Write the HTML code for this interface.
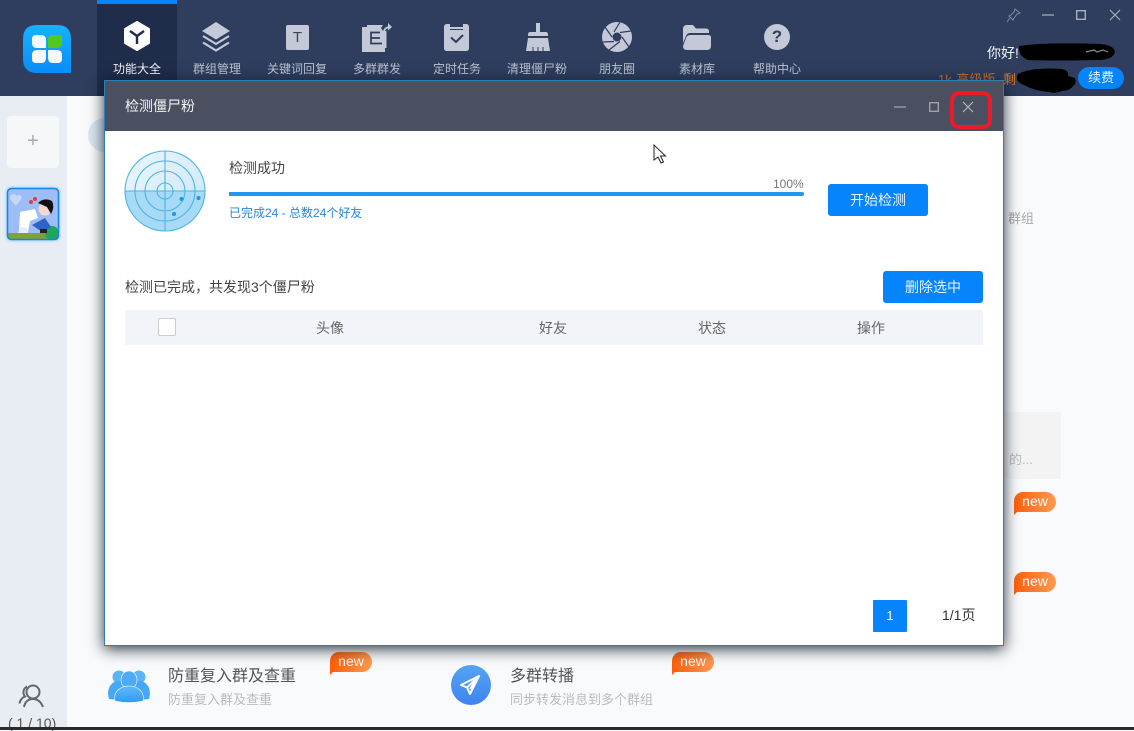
<!DOCTYPE html>
<html lang="zh"><head><meta charset="utf-8"><title>检测僵尸粉</title>
<style>
html,body{margin:0;padding:0}
body{width:1134px;height:730px;position:relative;overflow:hidden;background:#f8fafc;font-family:"Liberation Sans","Noto Sans CJK SC",sans-serif;color:#333}
.a{position:absolute;white-space:nowrap}
.nav{position:absolute;top:62px;width:80px;text-align:center;font-size:12px;line-height:14px;color:#bcc3d0}
.ic{position:absolute;overflow:visible}
.new{position:absolute;width:42px;height:20px;background:linear-gradient(90deg,#ff5f0c,#ff9a4e);border-radius:9px 10px 10px 0;color:#fff;font-size:14px;line-height:19px;text-align:center}
.new:after{content:"";position:absolute;left:0;top:18px;border-left:5px solid #ff5f0c;border-bottom:5px solid transparent}
.btn{position:absolute;width:100px;height:32px;background:#0684fb;border-radius:3px;color:#e8f4ff;font-size:14px;line-height:32px;text-align:center}
.th{position:absolute;top:320px;font-size:14px;line-height:16px;color:#666}
</style></head><body>

<!-- sidebar -->
<div class="a" style="left:0;top:96px;width:67px;height:631px;background:#e8edf3"></div>
<div class="a" style="left:7px;top:116px;width:52px;height:52px;background:#f6f7f8;border-radius:4px;text-align:center;font-size:20px;line-height:50px;color:#aaa">+</div>
<svg class="ic" style="left:7px;top:188px" width="52" height="52" viewBox="0 0 52 52">
<defs><clipPath id="av"><rect width="52" height="52" rx="4"/></clipPath></defs>
<g clip-path="url(#av)"><rect width="52" height="52" fill="#9cbdf6"/>
<path d="M3 8q4-4 7 0 3-3 5 2l-6 8-6-7z" fill="#c5d8fa"/>
<rect y="45" width="52" height="7" fill="#7da23c"/><circle cx="45" cy="45" r="7" fill="#1fa65a"/>
<path d="M13 24l15-3 3 9-8 3-2 11H12z" fill="#fff"/><path d="M14 39l6 1 1 5H11z" fill="#e8eef5"/>
<circle cx="38" cy="21" r="6.500" fill="#f6d9c8"/><path d="M31 15q6-6 14-2 3 6-1 13l-4-7z" fill="#111"/>
<path d="M25 37l13-7 6 9-9 5z" fill="#2c63c5"/><rect x="33" y="41" width="7" height="4" fill="#222"/>
<circle cx="24" cy="14" r="2" fill="#d8404a"/><circle cx="28" cy="11" r="2" fill="#d8404a"/></g>
<rect x=".5" y=".5" width="51" height="51" rx="4" fill="none" stroke="#1784e6" stroke-width="1.500"/></svg>
<div class="a" style="left:7px;top:188px;width:52px;height:52px;border-radius:4px;box-shadow:0 0 3px #45b4ff"></div>
<svg class="ic" style="left:18px;top:683px" width="28" height="26" viewBox="0 0 28 26" fill="none" stroke="#5f6670" stroke-width="2">
<circle cx="15" cy="9" r="6.500"/><path d="M6 24c1-5 4-8 9-8s8 3 10 8"/><path d="M9 3.500a6.500 6.500 0 0 0-2 10c-3 1-5 4-5.500 7"/></svg>
<div class="a" style="left:8px;top:715px;font-size:14px;line-height:16px;color:#555">( 1 / 10)</div>

<!-- background content -->
<div class="a" style="left:88px;top:118px;width:34px;height:34px;border-radius:50%;background:#d9e6f3"></div>
<div class="a" style="left:1008px;top:211px;font-size:13px;line-height:16px;color:#aaa">群组</div>
<div class="a" style="left:1003px;top:412px;width:58px;height:67px;background:#f3f3f4"></div>
<div class="a" style="left:1009px;top:452px;font-size:13px;line-height:16px;color:#bbb">的...</div>
<div class="new" style="left:1014px;top:492px">new</div>
<div class="new" style="left:1014px;top:572px">new</div>
<div class="new" style="left:330px;top:652px">new</div>
<div class="new" style="left:672px;top:652px">new</div>

<svg class="ic" style="left:108px;top:670px" width="42" height="33" viewBox="0 0 42 33">
<defs><linearGradient id="g1" x1="0" y1="0" x2="0" y2="1"><stop offset="0" stop-color="#62b8f8"/><stop offset="1" stop-color="#2f9bf5"/></linearGradient></defs>
<circle cx="11" cy="7" r="6.500" fill="#5ab5f8"/><circle cx="31" cy="7" r="6.500" fill="#5ab5f8"/>
<path d="M1 29c-3-10 2-18 10-18h20c8 0 13 8 10 18q-20 3-40 0z" fill="#45a8f6"/>
<ellipse cx="21" cy="10" rx="8" ry="9" fill="#4fabf7" stroke="#f8fafc" stroke-width=".6"/>
<path d="M7 31c-2-9 5-15 14-15s16 6 14 15q-14 3-28 0z" fill="url(#g1)" stroke="#f8fafc" stroke-width=".6"/></svg>
<div class="a" style="left:168px;top:667px;font-size:16px;line-height:20px;color:#555">防重复入群及查重</div>
<div class="a" style="left:168px;top:691px;font-size:13px;line-height:17px;color:#bbb">防重复入群及查重</div>

<svg class="ic" style="left:451px;top:665px" width="40" height="40" viewBox="0 0 40 40">
<defs><linearGradient id="g2" x1="0" y1="0" x2="0" y2="1"><stop offset="0" stop-color="#56a4f3"/><stop offset="1" stop-color="#3d84f0"/></linearGradient></defs>
<circle cx="20" cy="20" r="20" fill="url(#g2)"/>
<path d="M28 11L10 20l6 2.500L19 29zM16 22.500L28 11 19 24" fill="none" stroke="#fff" stroke-width="2" stroke-linejoin="round"/></svg>
<div class="a" style="left:510px;top:667px;font-size:16px;line-height:20px;color:#555">多群转播</div>
<div class="a" style="left:510px;top:691px;font-size:13px;line-height:17px;color:#bbb">同步转发消息到多个群组</div>

<div class="a" style="left:0;top:727px;width:1134px;height:3px;background:#2b2b2b"></div>

<!-- header -->
<div class="a" style="left:0;top:0;width:1134px;height:96px;background:#2f3d5e"></div>
<div class="a" style="left:97px;top:0;width:80px;height:96px;background:#1f2c4a"></div>
<div class="a" style="left:97px;top:0;width:80px;height:4px;background:#0684fb"></div>

<svg class="ic" style="left:23px;top:25px" width="48" height="48" viewBox="0 0 48 48">
<defs><linearGradient id="lg" x1="0" y1="0" x2="0" y2="1"><stop offset="0" stop-color="#18b2fb"/><stop offset="1" stop-color="#0a8cfb"/></linearGradient></defs>
<path d="M14 0h20q14 0 14 14v34H14Q0 48 0 34V14Q0 0 14 0z" fill="url(#lg)"/>
<path d="M9 14q0-4 4-4h5q5 0 5 5v8H14q-5 0-5-5z" fill="#f2f8fd"/>
<path d="M9 30q0-5 5-5h9v8q0 5-5 5h-5q-4 0-4-4z" fill="#f2f8fd"/>
<path d="M25 25h9q5 0 5 5v4q0 4-4 4h-5q-5 0-5-5z" fill="#f2f8fd"/>
<path d="M25 23v-8q0-5 5-5h9v8q0 5-5 5z" fill="#52c91e"/></svg>

<svg class="ic" style="left:123px;top:21px" width="28" height="30" viewBox="0 0 28 30">
<path d="M14 1l12 7v14l-12 7-12-7V8z" fill="#fff" stroke="#fff" stroke-width="2" stroke-linejoin="round"/>
<path d="M7 10l7 5 7-5M14 15v8" fill="none" stroke="#1f2c4a" stroke-width="2.400"/></svg>
<div class="nav" style="left:97px;color:#f2f4f8">功能大全</div>

<svg class="ic" style="left:201px;top:21px" width="30" height="31" viewBox="0 0 30 31">
<path d="M15 1l14 9-14 8.500L1 10z" fill="#c3c9d6"/>
<path d="M2 15l13 8 13-8M2 21.500l13 8 13-8" fill="none" stroke="#c3c9d6" stroke-width="2.200"/></svg>
<div class="nav" style="left:177px">群组管理</div>

<div class="a" style="left:286px;top:25px;width:23px;height:25px;background:#c3c9d6;border-radius:2px;color:#3a4665;font-size:15px;line-height:25px;text-align:center">T</div>
<div class="nav" style="left:257px">关键词回复</div>

<svg class="ic" style="left:362px;top:23px" width="31" height="30" viewBox="0 0 31 30">
<path d="M0 4h5v20h18v5H0z" fill="#c3c9d6"/>
<path d="M5 2h16l-2 3 2 3h3.500v17H5z" fill="#c3c9d6"/>
<path d="M18 9.500H9v11h11M9 15h9" stroke="#2f3d5e" stroke-width="1.700" fill="none"/>
<path d="M22 9q0-4 5-5" stroke="#c3c9d6" stroke-width="1.800" fill="none"/><path d="M26 0l4 4-4 3.500z" fill="#c3c9d6"/></svg>
<div class="nav" style="left:337px">多群群发</div>

<svg class="ic" style="left:444px;top:24px" width="25" height="27" viewBox="0 0 25 27">
<path d="M3 0h3v3h13V0h3q3 0 3 3v21q0 3-3 3H3q-3 0-3-3V3q0-3 3-3z" fill="#c3c9d6"/>
<path d="M6 5.500h13" stroke="#2f3d5e" stroke-width="1"/>
<path d="M7 13.500l5 4.500 7-7" fill="none" stroke="#2f3d5e" stroke-width="2"/></svg>
<div class="nav" style="left:417px">定时任务</div>

<svg class="ic" style="left:525px;top:22px" width="26" height="30" viewBox="0 0 26 30">
<path d="M11 1h4v9h6q2 0 2 3v1H3v-1q0-3 2-3h6z" fill="#c3c9d6"/>
<path d="M3 16h20l2 13H1z" fill="#c3c9d6"/><path d="M8 25v4M13 25v4M18 25v4" stroke="#2f3d5e" stroke-width="1"/></svg>
<div class="nav" style="left:497px">清理僵尸粉</div>

<svg class="ic" style="left:601px;top:21px" width="32" height="32" viewBox="0 0 32 32">
<circle cx="16" cy="16" r="15" fill="#c3c9d6"/><circle cx="16" cy="16" r="4.500" fill="#2f3d5e"/>
<g stroke="#2f3d5e" stroke-width="1.200" fill="none"><path d="M13 11L19 1"/><path d="M19 11.500L30 10"/><path d="M21 16L28 26"/><path d="M19 20.500L8 29"/><path d="M13 20.500L2 21"/><path d="M11 16L4 6"/></g></svg>
<div class="nav" style="left:577px">朋友圈</div>

<svg class="ic" style="left:683px;top:25px" width="28" height="25" viewBox="0 0 28 25">
<path d="M0 4q0-4 4-4h6l3 3.500h10q3 0 3 3V8H7q-3 0-4 3l-3 7z" fill="#c3c9d6"/>
<path d="M7 10h18q3 0 3 2v9q0 4-4 4H4q-4 0-4-4l3-8q1-3 4-3z" fill="#c3c9d6"/></svg>
<div class="nav" style="left:657px">素材库</div>

<div class="a" style="left:764px;top:24px;width:26px;height:26px;border-radius:50%;background:#c3c9d6;color:#2f3d5e;font-size:17px;font-weight:bold;line-height:26px;text-align:center">?</div>
<div class="nav" style="left:737px">帮助中心</div>

<!-- window controls -->
<svg class="ic" style="left:1006px;top:8px" width="16" height="15" viewBox="0 0 16 15" fill="none" stroke="#7f899f" stroke-width="1">
<path d="M9 1l5 4-3 1-3 4-1 2-4-4 2-1 3-3zM4 10l-3 4"/></svg>
<svg class="ic" style="left:1041px;top:9px" width="13" height="12" viewBox="0 0 13 12"><path d="M1 6h12" stroke="#a8afbe" stroke-width="1.200"/></svg>
<svg class="ic" style="left:1076px;top:10px" width="10" height="10" viewBox="0 0 10 10"><rect x=".7" y=".7" width="8.600" height="8.600" fill="none" stroke="#a8afbe" stroke-width="1.400"/></svg>
<svg class="ic" style="left:1110px;top:10px" width="10" height="10" viewBox="0 0 10 10"><path d="M0 0l10 10M10 0L0 10" stroke="#a8afbe" stroke-width="1.200"/></svg>

<!-- user -->
<div class="a" style="left:987px;top:44px;font-size:14px;line-height:18px;color:#f0f2f6">你好!</div>
<svg class="ic" style="left:1016px;top:42px" width="102" height="20" viewBox="0 0 102 20"><path d="M3 4Q30 0 84 2q14 1 15 8-2 8-18 8-40 1-69 0Q2 14 3 4z" fill="#000"/><path d="M70 10l8-2 3 2 6-2 5 2" stroke="#8a8a8a" stroke-width="1.200" fill="none"/></svg>
<div class="a" style="left:938px;top:72px;font-size:13px;line-height:16px;color:#d4752e">1<span style="letter-spacing:1px">k</span> 高级版</div>
<div class="a" style="left:1003px;top:72px;font-size:13px;line-height:16px;color:#d4752e">剩</div>
<svg class="ic" style="left:1012px;top:66px" width="66" height="30" viewBox="0 0 66 30"><path d="M6 8Q20 1 50 3q8 2 6 7l7 2q2 5-2 8-3 5-12 5-5 3-12 1-14-1-25-7Q2 15 6 8z" fill="#000"/></svg>
<div class="a" style="left:1078px;top:67px;width:46px;height:22px;border-radius:11px;background:#0684fb;color:#e8f4ff;font-size:13px;line-height:22px;text-align:center">续费</div>

<!-- dialog -->
<div class="a" style="left:104px;top:80px;width:898px;height:564px;background:#fff;border:1px solid #2a7fb8;box-shadow:0 3px 14px rgba(10,20,30,.85)"></div>
<div class="a" style="left:105px;top:81px;width:898px;height:50px;background:#4a5060"></div>
<div class="a" style="left:125px;top:98px;font-size:14px;line-height:17px;color:#f2f2f2">检测僵尸粉</div>
<svg class="ic" style="left:894px;top:101px" width="12" height="12" viewBox="0 0 12 12"><path d="M0 6h12" stroke="#a5a9b3" stroke-width="1.200"/></svg>
<svg class="ic" style="left:929px;top:102px" width="10" height="10" viewBox="0 0 10 10"><rect x=".7" y=".7" width="8.600" height="8.600" fill="none" stroke="#a5a9b3" stroke-width="1.300"/></svg>
<svg class="ic" style="left:963px;top:102px" width="10" height="10" viewBox="0 0 10 10"><path d="M0 0l10 10M10 0L0 10" stroke="#b4b8c0" stroke-width="1.100"/></svg>
<div class="a" style="left:950px;top:91px;width:34px;height:30px;border:4px solid #ea1c2a;border-radius:9px"></div>

<!-- radar -->
<svg class="ic" style="left:124px;top:150px" width="82" height="82" viewBox="0 0 82 82">
<defs><linearGradient id="rt" x1="0" y1="0" x2="1" y2="1"><stop offset="0" stop-color="#eaf6fc"/><stop offset="1" stop-color="#c9e6f7"/></linearGradient></defs>
<circle cx="41" cy="41" r="40" fill="url(#rt)"/>
<path d="M1 41h80a40 40 0 0 1-80 0z" fill="#a6daf7"/>
<g fill="none" stroke="#4db4e2" stroke-width="1.100"><circle cx="41" cy="41" r="40"/><circle cx="41" cy="41" r="30"/><circle cx="41" cy="41" r="20"/><circle cx="41" cy="41" r="8"/><path d="M1 41h80M41 1v80"/></g>
<circle cx="57.500" cy="49" r="2" fill="#2496d8"/><circle cx="74.500" cy="48" r="2" fill="#2496d8"/><circle cx="50" cy="64" r="2" fill="#2496d8"/></svg>

<div class="a" style="left:229px;top:160px;font-size:14px;line-height:17px;color:#444">检测成功</div>
<div class="a" style="left:773px;top:177px;font-size:12px;line-height:14px;color:#777">100%</div>
<div class="a" style="left:229px;top:192px;width:575px;height:4px;background:#2196ee;border-radius:0 2px 2px 0"></div>
<div class="a" style="left:229px;top:205px;font-size:12px;line-height:16px;color:#2a86d8">已完成24 - 总数24个好友</div>
<div class="btn" style="left:828px;top:184px">开始检测</div>

<svg class="ic" style="left:653px;top:144px" width="14" height="20" viewBox="0 0 14 20"><path d="M1 1v15l4-3 3 6 2.500-1-3-6h5z" fill="#fff" stroke="#222" stroke-width="1"/></svg>

<div class="a" style="left:125px;top:279px;font-size:14px;line-height:17px;color:#444">检测已完成，共发现3个僵尸粉</div>
<div class="btn" style="left:883px;top:271px">删除选中</div>

<div class="a" style="left:125px;top:310px;width:858px;height:35px;background:#f1f5f9"></div>
<div class="a" style="left:158px;top:318px;width:16px;height:16px;background:#fff;border:1px solid #ccc;border-radius:2px"></div>
<div class="th" style="left:316px">头像</div>
<div class="th" style="left:539px">好友</div>
<div class="th" style="left:698px">状态</div>
<div class="th" style="left:857px">操作</div>

<div class="a" style="left:873px;top:600px;width:34px;height:32px;background:#0684fb;border-radius:1px;color:#fff;font-size:13px;line-height:32px;text-align:center">1</div>
<div class="a" style="left:942px;top:607px;font-size:14px;line-height:17px;color:#333">1/1页</div>
</body></html>
